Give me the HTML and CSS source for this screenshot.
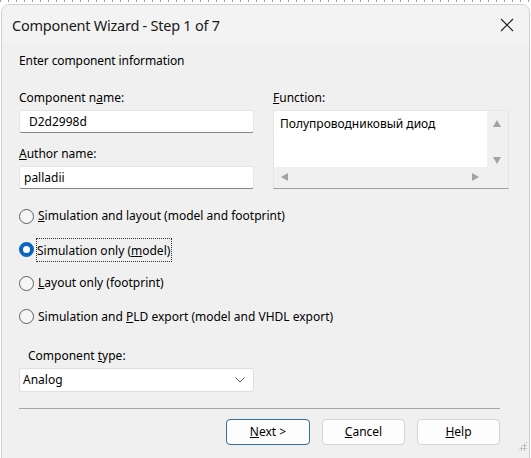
FILE: index.html
```html
<!DOCTYPE html>
<html>
<head>
<meta charset="utf-8">
<link rel="stylesheet" href="styles.css">
</head>
<body>
<div class="topline"></div>
<div class="window">
  <div class="titlebar">
    <span class="title">Component Wizard - Step 1 of 7</span>
    <svg class="close" width="14" height="14" viewBox="0 0 14 14"><path d="M1 1 L13 13 M13 1 L1 13" stroke="#1b1b1b" stroke-width="1.1" fill="none"/></svg>
  </div>
  <div class="content">
    <div class="heading">Enter component information</div>
    <div class="fields">
      <div class="col">
        <div class="label">Component n<u>a</u>me:</div>
        <div class="input pad-a">D2d2998d</div>
        <div class="label label-gap"><u>A</u>uthor name:</div>
        <div class="input pad-b">palladii</div>
      </div>
      <div class="col">
        <div class="label"><u>F</u>unction:</div>
        <div class="textarea">
          <div class="ta-text">Полупроводниковый диод</div>
          <div class="vscroll">
            <span class="tri tri-up"></span>
            <span class="tri tri-down"></span>
          </div>
          <div class="hscroll">
            <span class="tri tri-left"></span>
            <span class="tri tri-right"></span>
          </div>
          <div class="corner"></div>
        </div>
      </div>
    </div>
    <div class="radios">
      <div class="radio"><span class="circle"></span><span class="rlabel"><u>S</u>imulation and layout (model and footprint)</span></div>
      <div class="radio"><span class="circle checked"></span><span class="rlabel focus">Simulation only (<u>m</u>odel)</span></div>
      <div class="radio"><span class="circle"></span><span class="rlabel"><u>L</u>ayout only (footprint)</span></div>
      <div class="radio"><span class="circle"></span><span class="rlabel">Simulation and <u>P</u>LD export (model and VHDL export)</span></div>
    </div>
    <div class="type-label">Component <u>t</u>ype:</div>
    <div class="select">
      <span>Analog</span>
      <svg class="chev" width="10" height="6" viewBox="0 0 10 6"><path d="M0.5 0.5 L5 5 L9.5 0.5" stroke="#555" stroke-width="1" fill="none"/></svg>
    </div>
    <div class="sep"></div>
    <div class="buttons">
      <div class="btn default"><u>N</u>ext &gt;</div>
      <div class="btn"><u>C</u>ancel</div>
      <div class="btn"><u>H</u>elp</div>
    </div>
  </div>
  <div class="grip"></div>
</div>
</body>
</html>
```

FILE: styles.css
```css
* { box-sizing: border-box; }
html, body { margin: 0; padding: 0; }
body {
  width: 531px;
  height: 458px;
  overflow: hidden;
  background: #ffffff;
  font-family: "Noto Sans", "Open Sans", sans-serif;
  font-size: 12px;
  color: #000;
}
.topline {
  height: 2px;
  background: repeating-linear-gradient(90deg, #9a9a9a 0 1px, transparent 1px 8px);
  margin: 0 0 2px 0;
}
.window {
  position: relative;
  margin: 0 1px;
  height: 460px;
  border: 1px solid #cfcfcf;
  border-radius: 8px 8px 0 0;
  background: #f0f0f0;
  overflow: hidden;
}
.titlebar {
  height: 39px;
  background: #f3f3f3;
  display: flex;
  align-items: center;
  justify-content: space-between;
  padding: 0 15px 0 10px;
}
.title {
  font-size: 14.5px;
  color: #1a1a1a;
  letter-spacing: -0.25px;
  margin-top: 1px;
}
.close { display: block; margin-top: 0; }
.content {
  padding: 9px 0 0 17px;
  display: flex;
  flex-direction: column;
}
.heading { line-height: 16px; letter-spacing: -0.1px; }
.fields {
  display: flex;
  gap: 19px;
  margin-top: 21px;
}
.col { display: flex; flex-direction: column; }
.col:first-child { width: 235px; }
.col:last-child { width: 236px; }
.label { line-height: 16px; margin-bottom: 4px; }
.label-gap { margin-top: 13px; }
.input {
  height: 23px;
  background: #fff;
  border: 1px solid #e6e6e6;
  border-bottom-color: #868686;
  border-radius: 3px;
  line-height: 21px;
}
.pad-a { padding-left: 9px; }
.pad-b { padding-left: 4px; }
.textarea {
  position: relative;
  height: 79px;
  background: #fff;
  border: 1px solid #e6e6e6;
  border-bottom-color: #a0a0a0;
  display: grid;
  grid-template-columns: 1fr 21px;
  grid-template-rows: 1fr 21px;
}
.ta-text { padding: 5px 0 0 6px; line-height: 16px; }
.vscroll {
  background: #f0f0f0;
  position: relative;
}
.hscroll {
  background: #f0f0f0;
  position: relative;
}
.corner { background: #f0f0f0; }
.tri { position: absolute; width: 0; height: 0; }
.tri-up {
  left: 6px; top: 9px;
  border-left: 4.5px solid transparent;
  border-right: 4.5px solid transparent;
  border-bottom: 7px solid #a2a2a2;
}
.tri-down {
  left: 6px; bottom: 3px;
  border-left: 4.5px solid transparent;
  border-right: 4.5px solid transparent;
  border-top: 7px solid #a2a2a2;
}
.tri-left {
  left: 7px; top: 6px;
  border-top: 4.5px solid transparent;
  border-bottom: 4.5px solid transparent;
  border-right: 7px solid #a2a2a2;
}
.tri-right {
  right: 8px; top: 6px;
  border-top: 4.5px solid transparent;
  border-bottom: 4.5px solid transparent;
  border-left: 7px solid #a2a2a2;
}
.radios {
  display: flex;
  flex-direction: column;
  gap: 13.5px;
  margin-top: 17px;
}
.radio {
  height: 20px;
  display: flex;
  align-items: center;
}
.circle {
  width: 15px;
  height: 15px;
  border-radius: 50%;
  border: 1px solid #5f5f5f;
  background: #f6f6f6;
  margin: 0 4px 0 0;
  flex: none;
}
.circle.checked {
  border: 4.5px solid #0a64c2;
  background: #fff;
}
.rlabel { line-height: 16px; }
.rlabel.focus {
  outline: 1px dotted #333;
  outline-offset: 0;
  padding: 2px 1px 0 0;
  line-height: 20px;
  margin-left: -1px;
}
.type-label {
  margin-top: 21px;
  margin-left: 9px;
  line-height: 16px;
}
.select {
  margin-top: 4px;
  width: 235px;
  height: 24px;
  background: #fff;
  border: 1px solid #dedede;
  border-radius: 3px;
  display: flex;
  align-items: center;
  justify-content: space-between;
  padding: 0 4px 0 3px;
}
.chev { margin-right: 4px; }
.sep {
  margin-top: 16px;
  width: 481px;
  height: 1px;
  background: #a6a6a6;
}
.buttons {
  margin-top: 10px;
  width: 481px;
  display: flex;
  justify-content: flex-end;
  gap: 12px;
}
.btn {
  width: 83px;
  height: 26px;
  border: 1px solid #d3d3d3;
  border-radius: 4px;
  background: #fdfdfd;
  display: flex;
  align-items: center;
  justify-content: center;
  line-height: 16px;
}
.btn.default {
  border-color: #2f6fa8;
  width: 84px;
}
.grip {
  position: absolute;
  right: 2px;
  bottom: 12px;
  width: 10px;
  height: 10px;
  background-image: radial-gradient(circle, #b0b0b0 0.9px, transparent 1.2px);
  background-size: 3px 3px;
  clip-path: polygon(100% 0, 100% 100%, 0 100%);
}
```
